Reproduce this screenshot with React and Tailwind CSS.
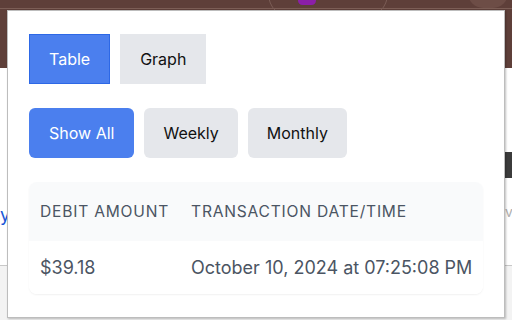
import React from "react";

function TabButton({ active, children }) {
  return (
    <button
      className={
        active
          ? "px-[19px] h-[50px] bg-[#4b7fee] border border-[#2d68e6] text-white text-[16px]"
          : "px-5 h-[50px] bg-[#e5e7eb] text-[#111] text-[16px]"
      }
    >
      {children}
    </button>
  );
}

function FilterButton({ active, children }) {
  return (
    <button
      className={
        active
          ? "px-5 h-[50px] rounded-md bg-[#4b7fee] text-white text-[16px]"
          : "px-[19px] h-[50px] rounded-md bg-[#e5e7eb] text-[#111] text-[16px]"
      }
    >
      {children}
    </button>
  );
}

export default function App() {
  return (
    <div
      className="relative w-[512px] h-[320px] overflow-hidden bg-[#f0f0f0] flex flex-col"
      style={{ fontFamily: "Inter, 'Noto Sans', sans-serif" }}
    >
      {/* browser chrome behind the popup */}
      <div className="relative h-[68px] bg-[#5e3f39] overflow-hidden">
        <div className="h-[9px] border-b border-[#7b5d55]" />
        <div className="absolute left-[268px] -top-[30px] w-[120px] h-[48px] rounded-full border border-[#7a5c55]" />
        <div className="absolute left-[298px] -top-[4px] w-[18px] h-[9px] rounded-full bg-[#8b1fa8]" />
        <div className="absolute left-[468px] -top-[22px] w-[40px] h-[30px] rounded-full bg-[#6d4d46]" />
      </div>
      <div className="h-[197px] bg-white flex justify-between overflow-hidden">
        <div className="pt-[135px] text-[18px] leading-[24px] text-[#1a56d6]">y</div>
        <div className="w-[7px] flex flex-col pt-[84px] overflow-hidden">
          <div className="h-[26px] bg-[#3b3b3b]" />
          <div className="mt-[24px] text-[14px] leading-[20px] text-[#b0b0b0]">v</div>
        </div>
      </div>
      <div className="h-px bg-[#c8c8c8]" />
      <div className="flex-1 bg-[#f3f3f3]" />

      {/* extension popup */}
      <div className="absolute left-[7px] top-[10px] w-[498px] h-[308px] bg-white border border-[#bdbdbd] shadow-[1px_1px_2px_rgba(0,0,0,0.25)] pl-[21px] pt-[23px] flex flex-col gap-[24px] items-start">
        <div className="flex gap-[10px]">
          <TabButton active>Table</TabButton>
          <TabButton>Graph</TabButton>
        </div>
        <div className="flex gap-[10px]">
          <FilterButton active>Show All</FilterButton>
          <FilterButton>Weekly</FilterButton>
          <FilterButton>Monthly</FilterButton>
        </div>
        <div className="rounded-lg overflow-hidden shadow-[0_1px_2px_rgba(0,0,0,0.06)]">
          <table className="border-collapse">
            <thead>
              <tr className="bg-[#f9fafb]">
                <th className="h-[59px] px-[11px] text-left font-normal text-[15.6px] tracking-wider uppercase text-[#4b5563]">Debit Amount</th>
                <th className="h-[59px] px-[11px] text-left font-normal text-[15.6px] tracking-wider uppercase text-[#4b5563]">Transaction Date/Time</th>
              </tr>
            </thead>
            <tbody>
              <tr className="bg-white">
                <td className="h-[53px] px-[11px] text-[18px] text-[#4b5563]">$39.18</td>
                <td className="h-[53px] px-[11px] text-[18px] text-[#4b5563]">October 10, 2024 at 07:25:08 PM</td>
              </tr>
            </tbody>
          </table>
        </div>
      </div>
    </div>
  );
}
